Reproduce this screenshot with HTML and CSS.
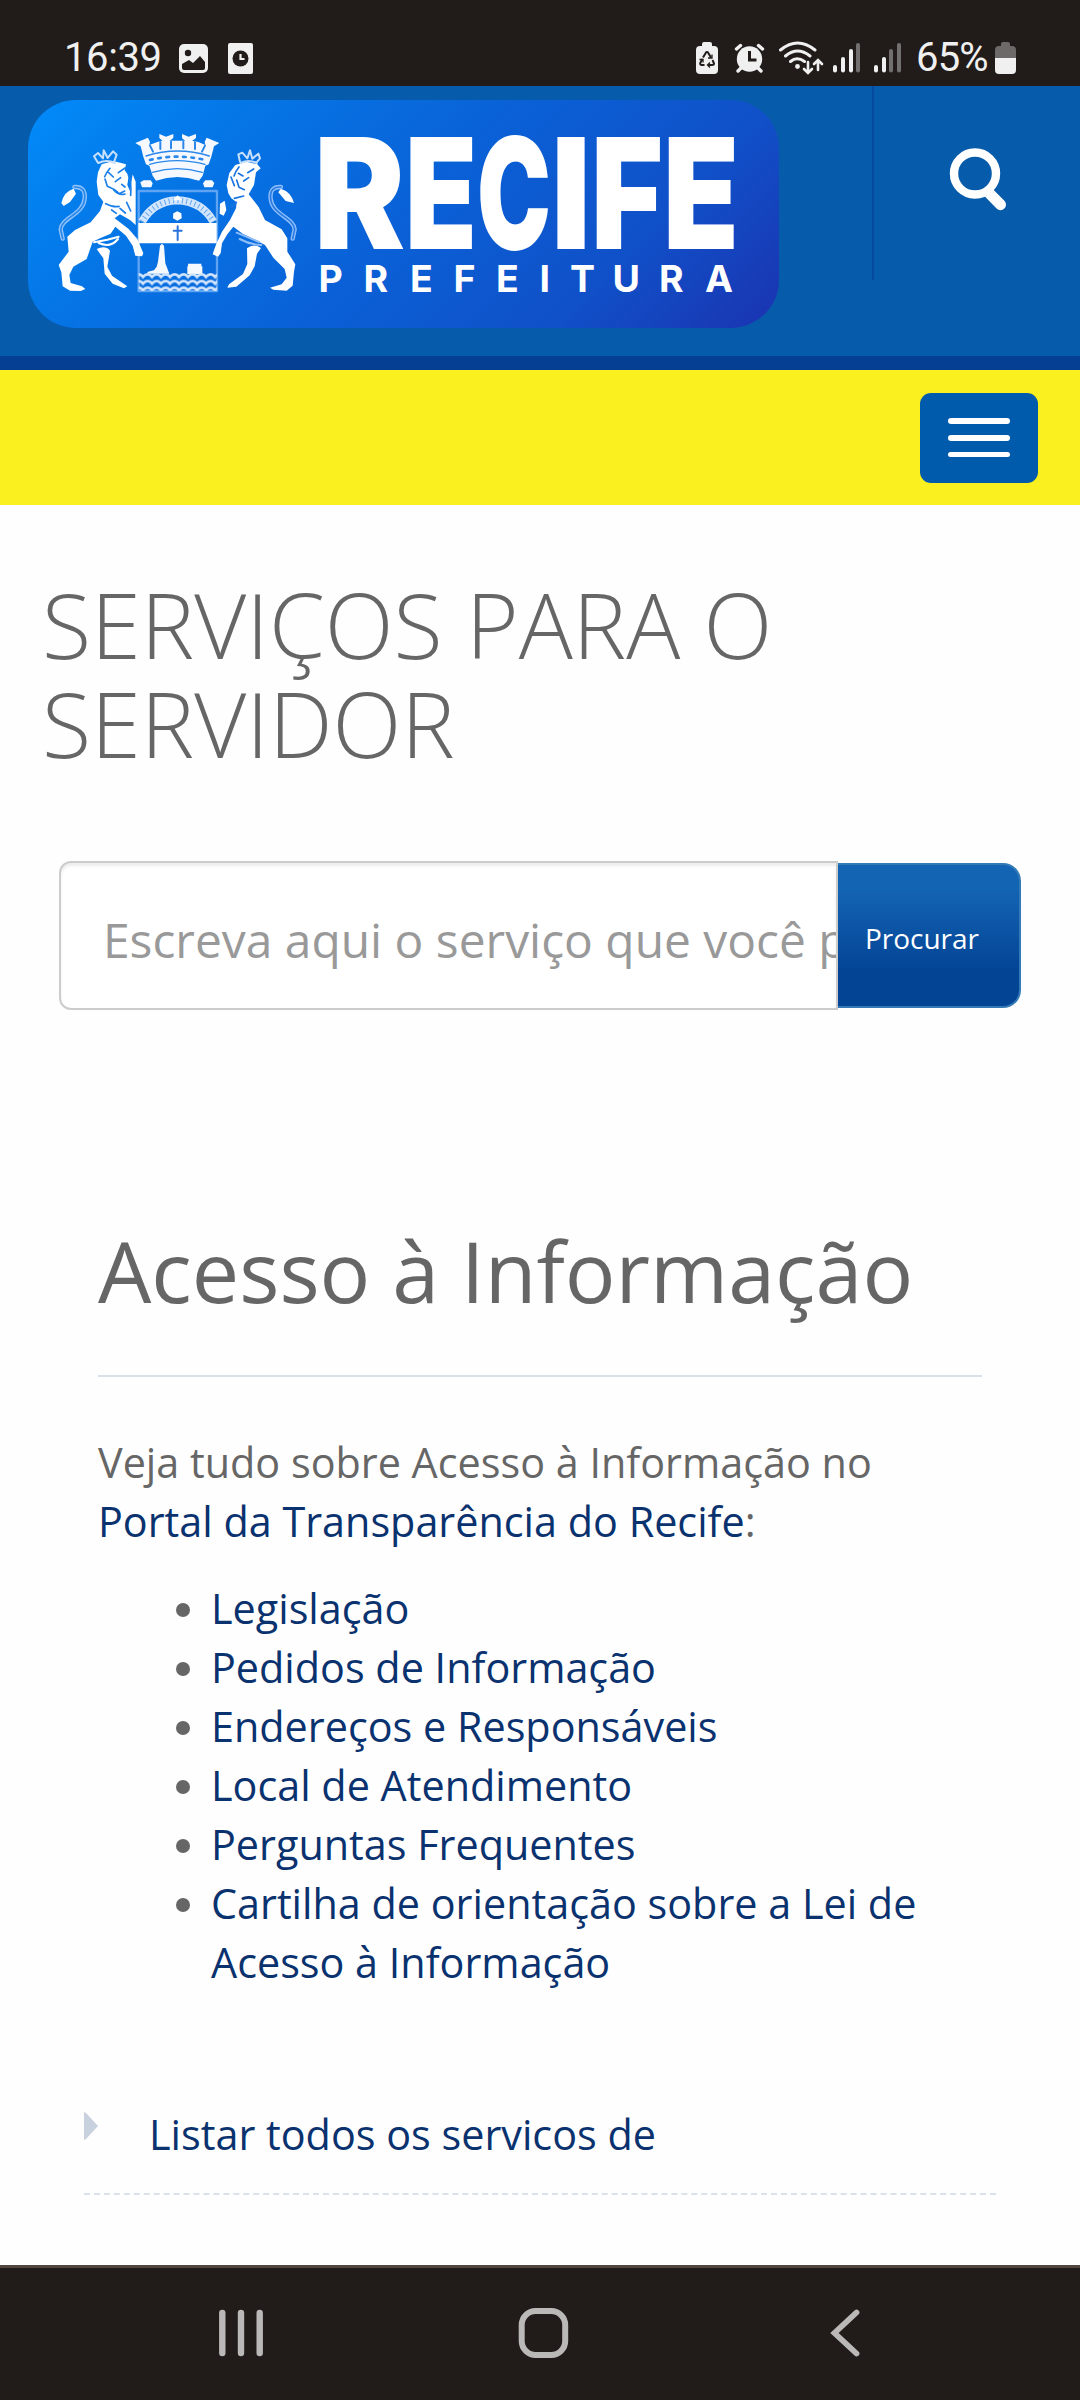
FILE: index.html
```html
<!DOCTYPE html>
<html lang="pt-BR">
<head>
<meta charset="utf-8">
<title>Serviços para o Servidor</title>
<link rel="stylesheet" href="styles.css">
</head>
<body>
<div class="status">
  <span class="status-text time">16:39</span>
  <svg class="status-icons-left" width="80" height="40" viewBox="175 38 80 40">
    <rect x="179" y="44" width="29" height="29" rx="5" fill="#f0f0f0"/>
    <circle cx="188" cy="53" r="3.2" fill="#211c1a"/>
    <path d="M182 64l7-4 4 3 7-7 5 6v6q0 2-2 2h-19q-2 0-2-2z" fill="#211c1a"/>
    <rect x="228" y="43" width="25" height="31" rx="2" fill="#f0f0f0"/>
    <circle cx="240.500" cy="58.500" r="8" fill="#211c1a"/>
    <path d="M240.500 54v5h4" fill="none" stroke="#f0f0f0" stroke-width="2.200"/>
  </svg>
  <svg class="status-icons-right" width="212" height="40" viewBox="692 38 212 40">
    <g fill="#f0f0f0">
      <path d="M702 46v-2q0-2 2-2h6q2 0 2 2v2h2q4 0 4 4v20q0 4-4 4h-14q-4 0-4-4V50q0-4 4-4z"/>
      <circle cx="749.500" cy="59" r="12.700"/>
    </g>
    <g fill="none" stroke="#211c1a" stroke-width="2">
      <path d="M703 57.500l3-5q1-1.200 2 0l3 5M712.500 60l1.500 3.500q0 1.500-2 1.500h-4M704.500 65h-3q-2-.5-1-2.500l2-3.500"/>
      <path d="M749.500 51v9h7" stroke-width="3"/>
    </g>
    <path d="M712 54.500v3.500h-4M710 62.500l-2.500 2.500 2.500 2.500M699.500 59.500h3.500v3" fill="none" stroke="#211c1a" stroke-width="1.300"/>
    <path d="M736.500 49l4-3.500M762.500 49l-4-3.500M741 68l-3 3M758 68l3 3" fill="none" stroke="#f0f0f0" stroke-width="3.400" stroke-linecap="round"/>
    <g fill="none" stroke="#f0f0f0" stroke-width="3" stroke-linecap="round">
      <path d="M780.500 50q17-14 34.500 0M785.500 56q12-10 24.500 0M790.500 61.500q6.500-5.500 14 0"/>
      <path d="M808 62v10M804 69l4 4 4-4M818 70V60.500M814 64l4-4 4 4" stroke-width="2.600"/>
    </g>
    <circle cx="797.500" cy="66.500" r="2.400" fill="#f0f0f0"/>
    <g fill="#f0f0f0">
      <rect x="833" y="65" width="4" height="7.500" rx="2"/><rect x="841" y="57" width="4" height="15.500" rx="2"/><rect x="849" y="49" width="4" height="23.500" rx="2"/>
      <rect x="874" y="65" width="4" height="7.500" rx="2"/><rect x="882" y="57" width="4" height="15.500" rx="2"/>
    </g>
    <g fill="#72706f">
      <rect x="856" y="43" width="4" height="29.500" rx="2"/><rect x="889" y="49" width="4" height="23.500" rx="2"/><rect x="897" y="43" width="4" height="29.500" rx="2"/>
    </g>
  </svg>
  <span class="status-text percent">65%</span>
  <svg class="battery" width="21" height="32" viewBox="0 0 21 32">
    <path d="M6 4V2q0-2 2-2h5q2 0 2 2v2h2q4 0 4 4v8H0V8q0-4 4-4z" fill="#6c6968"/>
    <path d="M0 16h21v12q0 4-4 4H4q-4 0-4-4z" fill="#f0f0f0"/>
  </svg>
</div>

<header class="header">
  <svg class="logo" width="751" height="228" viewBox="0 0 751 228">
    <defs>
      <linearGradient id="lg" gradientUnits="userSpaceOnUse" x1="0" y1="0" x2="489" y2="489">
        <stop offset="0" stop-color="#028bfa"/><stop offset=".23" stop-color="#0576e6"/><stop offset=".5" stop-color="#0a61d7"/><stop offset=".77" stop-color="#1050c8"/><stop offset="1" stop-color="#1b33b1"/>
      </linearGradient>
      <pattern id="water" width="27" height="20" patternUnits="userSpaceOnUse" x="356" y="564">
        <path d="M0 4q7 0 13 8q7-8 14-8" fill="none" stroke="#d5e5fb" stroke-width="8"/>
      </pattern>
    </defs>
    <rect width="751" height="228" rx="48" fill="url(#lg)"/>
    <g transform="translate(-8 -15) scale(.33333)" stroke-linejoin="round" stroke-linecap="round">
      <!-- mural crown -->
      <g fill="#f5f9ff">
        <path d="M346 174L384 158L390 170L388 180L412 171L430 167H515L535 171L556 180L554 170L560 158L598 174L582 184L574 215L566 238L556 242L548 272L537 287Q472 265 408 287L398 272L388 242L378 238L370 215L362 184Z"/>
        <path d="M418 147l20 8 22-8v12l-11 8v20h-22v-20l-9-8zM486 147l20 8 22-8v12l-11 8v20h-22v-20l-9-8z"/>
        <path d="M361 292l10-6h21l6 9-4 12h-28zM549 295l7-9h20l7 8-5 13h-25z"/>
      </g>
      <g fill="none" stroke="#2b88ea" stroke-width="4">
        <path d="M378 213q94-30 190 0M389 238q80-22 166 0M397 262q75-22 150 0"/>
        <path d="M390 182l9 18M421 172v20M453 170v20M490 170v20M525 172v20M555 182l-9 18" stroke-width="6"/>
        <path d="M390 225q80-20 166 0" stroke-dasharray="8 17" stroke-width="8"/>
      </g>
      <!-- shield -->
      <g fill="none" stroke="#5ea4f3">
        <path d="M356 318h235v300H356z" stroke-width="7"/>
        <path d="M366 410q35-61 105-64q75 3 109 64" stroke="#d4e6fd" stroke-width="24" stroke-linecap="butt"/>
        <path d="M366 410q35-61 105-64q75 3 109 64" stroke="#5fa6f2" stroke-width="16" stroke-linecap="butt" stroke-dasharray="3 10"/>
      </g>
      <path d="M458 346l15-15 15 15zM472 379l12 6 1 15-13 7-13-7 1-15zM355 414h235v61H355z" fill="#fff"/>
      <path d="M473 424v41M461 437h24" stroke="#2a74dc" stroke-width="6"/>
      <path d="M420 482L426 476L432 482L436 535L448 566H380L384 560L402 556L410 545L414 530ZM504 536H544V544H547V567H502V544H504Z" fill="#f6faff"/>
      <path d="M356 564h235v54H356z" fill="url(#water)"/>
      <!-- left supporter -->
      <g fill="#fff">
        <path d="M245 238L280 228L318 238L314 256L326 272L322 300L330 318L338 268L347 290V420L330 405L300 388L284 400L326 432L352 462L370 505L366 514L346 512L338 482L318 452L286 425L272 446L240 460L218 470L200 522L160 545L148 570L152 594L186 604L196 612L182 618L150 617L128 604L124 562L116 540L146 500L142 455L165 435L212 412L240 378L250 350L235 330L230 290L234 262Z"/>
        <path d="M230 492Q256 480 270 497L262 545L276 572L322 604L312 610L278 596L254 566L250 520Z"/>
        <path d="M124 354Q132 319 161 311L168 326L150 351L131 363Z"/>
      </g>
      <g fill="none" stroke="#1a7fe9" stroke-width="5">
        <path d="M270 250q-12 14-16 25M266 263l14 13M295 263l20-14M286 290l16-12M305 298l10 8M255 282l7 22q22 8 36 22l16-8M281 315q16 18 34 12M257 356q24 12 40 8M275 375l14 10M300 370l16 14M325 270q10 21 7 61M320 352l12 26"/>
      </g>
      <path d="M222 472l40-8 34-9M236 474q35 16 58-12" fill="none" stroke="#fff" stroke-width="6"/>
      <path d="M163 306q35-2 31 35c-4 48-69 56-72 92l6 28" fill="none" stroke="#93c4fa" stroke-width="13"/>
      <path d="M163 306q35-2 31 35c-4 48-69 56-72 92l6 28" fill="none" stroke="#2a88ea" stroke-width="5"/>
      <!-- right supporter -->
      <g fill="#fff">
        <path d="M646 240L680 230L712 238L722 250L708 262L702 300L686 328L716 366L735 405L785 433L802 460V500L826 538L822 560L818 602L800 617L760 614L750 608L785 598L800 578L794 552L760 518L735 480L705 464L668 446L640 425L622 448L606 475L602 505L594 515L578 508L584 490L592 470L606 440L630 405L648 370L650 352L634 340L625 325L620 300L628 264Z"/>
        <path d="M681 490Q701 474 723 489L711 506L704 544L689 571L649 605L622 608L627 598L669 567L682 537Z"/>
        <path d="M822 354q-9-34-40-43l-7 11 22 26zM600 356l14-9 5 28-8 17-12-6z"/>
      </g>
      <g fill="none" stroke="#1a74e1" stroke-width="5">
        <path d="M657 246q-12 15-15 27M655 265l14 8M683 263l18-11M671 288l15-10M650 285l7 22 16 7M643 340l28-7M633 276l10 26M635 366l14-14"/>
      </g>
      <path d="M650 443l67 28M659 462q31 17 65 18" fill="none" stroke="#8dbdf8" stroke-width="6"/>
      <path d="M783 306q-35-2-31 35c4 48 69 56 72 92l-6 28" fill="none" stroke="#8fbffa" stroke-width="13"/>
      <path d="M783 306q-35-2-31 35c4 48 69 56 72 92l-6 28" fill="none" stroke="#2a7ce2" stroke-width="5"/>
      <!-- small crowns -->
      <g fill="none" stroke="#c8e0fc" stroke-width="6">
        <path d="M233 232l-11-18 12-10 15 16 2-24 12 23 16-20 11 10-8 22M235 234q25-12 50 0"/>
        <path d="M660 230l-5-22 12-5 15 17 8-24 7 25 18-15 5 14-11 13M662 234q25-12 48 0"/>
      </g>
    </g>
    <g fill="#fff" font-family="Inter, sans-serif">
      <text class="wordmark" y="149"><tspan x="286" textLength="91" lengthAdjust="spacingAndGlyphs">R</tspan><tspan x="377" textLength="72" lengthAdjust="spacingAndGlyphs">E</tspan><tspan x="449" textLength="74" lengthAdjust="spacingAndGlyphs">C</tspan><tspan x="523" textLength="40" lengthAdjust="spacingAndGlyphs">I</tspan><tspan x="563" textLength="72" lengthAdjust="spacingAndGlyphs">F</tspan><tspan x="635" textLength="76" lengthAdjust="spacingAndGlyphs">E</tspan></text>
      <text class="subtitle" x="290.500 335.500 382 425.500 468 511.500 542 584.500 631 677" y="191.500">PREFEITURA</text>
    </g>
  </svg>
  <a class="search-link" href="#">
    <svg width="60" height="66" viewBox="948 146 60 66">
      <circle cx="975" cy="173.500" r="21" fill="none" stroke="#fff" stroke-width="8.400"/>
      <path d="M989 193l11.500 11.700" stroke="#fff" stroke-width="11" stroke-linecap="round"/>
    </svg>
  </a>
</header>

<nav class="menu-bar">
  <button class="menu-button"><i></i><i></i><i></i></button>
</nav>

<main class="page">
  <h1>SERVIÇOS PARA O SERVIDOR</h1>
  <form class="search">
    <input type="text" placeholder="Escreva aqui o serviço que você procura">
    <button type="button">Procurar</button>
  </form>
  <section class="info">
    <h2>Acesso à Informação</h2>
    <p>Veja tudo sobre Acesso à Informação no <a href="#">Portal da Transparência do Recife</a>:</p>
    <ul>
      <li><a href="#">Legislação</a></li>
      <li><a href="#">Pedidos de Informação</a></li>
      <li><a href="#">Endereços e Responsáveis</a></li>
      <li><a href="#">Local de Atendimento</a></li>
      <li><a href="#">Perguntas Frequentes</a></li>
      <li><a href="#">Cartilha de orientação sobre a Lei de Acesso à Informação</a></li>
    </ul>
  </section>
  <div class="list-row">
    <svg width="14" height="28" viewBox="0 0 14 28"><path d="M0 0l2 1 12 13L2 27l-2 1z" fill="#c8d1de"/></svg>
    <a href="#">Listar todos os servicos de</a>
  </div>
  <svg class="dashes" width="912" height="2"><path d="M0 1h912" stroke="#dbe1ea" stroke-width="2" stroke-dasharray="6 3.956"/></svg>
</main>

<footer class="system-nav">
  <svg width="1080" height="132" viewBox="0 2268 1080 132">
    <g fill="none" stroke="#bbb9b7" stroke-linecap="round">
      <path d="M222.300 2313v40M241 2313v40M259.700 2313v40" stroke-width="6.400"/>
      <rect x="521.700" y="2311" width="43.500" height="44" rx="14" stroke-width="6"/>
      <path d="M856.500 2312.500L834.500 2333l22 20.500" stroke-width="5.800" stroke-linejoin="miter"/>
    </g>
  </svg>
</footer>
</body>
</html>
```

FILE: styles.css
```css
* { box-sizing: border-box; }
body {
  margin: 0;
  width: 1080px;
  height: 2400px;
  overflow: hidden;
  display: flex;
  flex-direction: column;
  background: #fefefe;
  color: #666;
  font: 41.340px/59px "Open Sans", sans-serif;
}
svg { display: block; flex: none; }
a { color: #0a326f; text-decoration: none; }

.status {
  height: 86px;
  flex: none;
  background: #211c1a;
  display: flex;
  align-items: flex-start;
  padding-left: 64px;
}
.status-text {
  font: 40px/48px Roboto, sans-serif;
  color: #f0f0f0;
  margin-top: 34px;
  white-space: nowrap;
}
.time { width: 111px; letter-spacing: -.4px; }
.status-icons-left { margin-top: 38px; }
.status-icons-right { margin: 38px 0 0 437px; }
.percent { width: 79px; margin-left: 12px; letter-spacing: -.8px; }
.battery { margin-top: 42px; }

.header {
  height: 284px;
  flex: none;
  background: #065bab;
  border-bottom: 14px solid #053f94;
  display: flex;
  justify-content: space-between;
  padding-left: 28px;
}
.logo { margin-top: 14px; }
.wordmark { font-size: 154px; font-weight: 900; }
.subtitle { font-size: 37.500px; font-weight: 700; }
.search-link {
  width: 208px;
  height: 194px;
  border-left: 2px solid #064a9f;
  padding: 60px 0 0 74px;
}

.menu-bar {
  height: 135px;
  flex: none;
  background: #faef1f;
  display: flex;
  justify-content: flex-end;
  padding: 23px 42px 0 0;
}
.menu-button {
  width: 118px;
  height: 90px;
  border: 0;
  border-radius: 11px;
  background: #015bad;
  padding: 25px 28px;
  display: flex;
  flex-direction: column;
  gap: 11px;
}
.menu-button i { width: 62px; height: 6px; flex: none; border-radius: 3px; background: #fff; }
.menu-button i:last-child { height: 5px; }

.page { flex: 1; }
h1 {
  margin: 70px 42px 88px;
  width: 780px;
  font-size: 90px;
  line-height: 99px;
  font-weight: 300;
}
.search { display: flex; align-items: center; margin-left: 59px; height: 149px; }
.search input {
  width: 779px;
  height: 149px;
  border: 2px solid #ccc;
  border-radius: 12px 0 0 12px;
  padding: 7px 0 0 42px;
  background: #fff;
  box-shadow: inset 0 3px 3px rgba(0,0,0,.075);
  font: 47.900px "Open Sans", sans-serif;
}
.search input::placeholder { color: #999; opacity: 1; }
.search button {
  width: 183px;
  height: 145px;
  border: 2px solid #337ab7;
  border-left: 0;
  border-radius: 0 18px 18px 0;
  padding: 4px 13px 0 0;
  background: linear-gradient(#1464b4 17%, #034495 75%);
  color: #fff;
  font: 28px "Open Sans", sans-serif;
}
.info { padding: 215px 98px 0; }
h2 {
  margin: 0 0 56px;
  padding-bottom: 58px;
  border-bottom: 2px solid #d9e0e9;
  font-size: 84.400px;
  line-height: 92px;
  font-weight: 400;
}
p { margin: 0 0 28px; }
ul { margin: 0; padding: 0; list-style: none; }
li { display: flex; padding-left: 78px; }
li::before {
  content: "";
  width: 14px;
  height: 14px;
  flex: none;
  border-radius: 50%;
  background: #666;
  margin: 24px 21px 0 0;
}
.list-row {
  display: flex;
  margin: 113px 84px 0;
  height: 88px;
  gap: 51px;
}
.list-row svg { margin-top: 7px; }
.dashes { margin-left: 84px; }

.system-nav {
  height: 135px;
  flex: none;
  border-top: 3px solid #51453f;
  background: #211c1a;
}
```
